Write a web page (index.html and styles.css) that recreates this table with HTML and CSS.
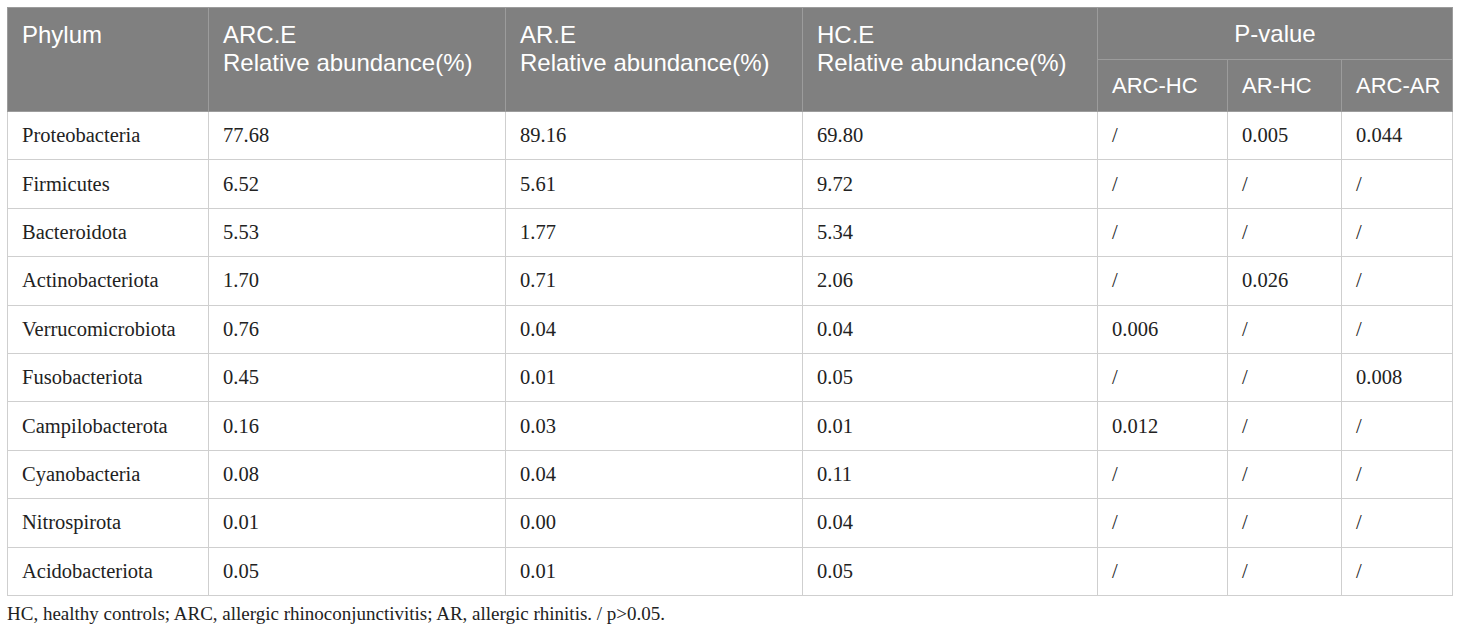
FILE: index.html
```html
<!DOCTYPE html>
<html lang="en">
<head>
  <meta charset="UTF-8" />
  <title>Relative abundance by phylum</title>
  <link rel="stylesheet" href="styles.css">
</head>
<body>
  <div class="table-wrap">
    <table>
      <colgroup>
        <col class="c-name"><col class="c-abund"><col class="c-abund"><col class="c-abund3">
        <col class="c-p1"><col class="c-p2"><col class="c-p3">
      </colgroup>
      <thead>
        <tr>
          <th rowspan="2" class="top">Phylum</th>
          <th rowspan="2" class="top">ARC.E<br>Relative abundance(%)</th>
          <th rowspan="2" class="top">AR.E<br>Relative abundance(%)</th>
          <th rowspan="2" class="top">HC.E<br>Relative abundance(%)</th>
          <th colspan="3" class="center">P-value</th>
        </tr>
        <tr class="sub"><th>ARC-HC</th><th>AR-HC</th><th>ARC-AR</th></tr>
      </thead>
      <tbody>
        <tr><td>Proteobacteria</td><td>77.68</td><td>89.16</td><td>69.80</td><td>/</td><td>0.005</td><td>0.044</td></tr>
        <tr><td>Firmicutes</td><td>6.52</td><td>5.61</td><td>9.72</td><td>/</td><td>/</td><td>/</td></tr>
        <tr><td>Bacteroidota</td><td>5.53</td><td>1.77</td><td>5.34</td><td>/</td><td>/</td><td>/</td></tr>
        <tr><td>Actinobacteriota</td><td>1.70</td><td>0.71</td><td>2.06</td><td>/</td><td>0.026</td><td>/</td></tr>
        <tr><td>Verrucomicrobiota</td><td>0.76</td><td>0.04</td><td>0.04</td><td>0.006</td><td>/</td><td>/</td></tr>
        <tr><td>Fusobacteriota</td><td>0.45</td><td>0.01</td><td>0.05</td><td>/</td><td>/</td><td>0.008</td></tr>
        <tr><td>Campilobacterota</td><td>0.16</td><td>0.03</td><td>0.01</td><td>0.012</td><td>/</td><td>/</td></tr>
        <tr><td>Cyanobacteria</td><td>0.08</td><td>0.04</td><td>0.11</td><td>/</td><td>/</td><td>/</td></tr>
        <tr><td>Nitrospirota</td><td>0.01</td><td>0.00</td><td>0.04</td><td>/</td><td>/</td><td>/</td></tr>
        <tr><td>Acidobacteriota</td><td>0.05</td><td>0.01</td><td>0.05</td><td>/</td><td>/</td><td>/</td></tr>
      </tbody>
    </table>
    <p class="note">HC, healthy controls; ARC, allergic rhinoconjunctivitis; AR, allergic rhinitis. / p&gt;0.05.</p>
  </div>
</body>
</html>
```

FILE: styles.css
```css
:root{
  --head:#808080;
  --head-line:#9c9c9c;
  --line:#cfcfcf;
  --text:#222;
}
*{box-sizing:border-box}
body{margin:0;background:#fff;color:var(--text);font-family:"Liberation Serif","Times New Roman",serif}
.table-wrap{padding:7px 7px 0 7px}
table{
  width:1446px;border-collapse:collapse;table-layout:fixed;
  border:1px solid var(--line);
}
.c-name{width:201px}
.c-abund{width:297px}
.c-abund3{width:295px}
.c-p1{width:130px}
.c-p2{width:114px}
.c-p3{width:111px}

th{
  background:var(--head);color:#fff;
  font-family:"Liberation Sans",Arial,sans-serif;
  font-weight:400;font-size:24px;line-height:28px;
  text-align:left;padding:0 14px;height:52px;
  border:1px solid var(--head-line);
  white-space:nowrap;
}
th.top{vertical-align:top;padding-top:13px}
th.center{text-align:center}
.sub th{font-size:22px}
td{
  height:48.4px;padding:0 14px;
  font-size:20.5px;border:1px solid var(--line);
  vertical-align:middle;
}
.note{margin:6px 0 0;font-size:19px;line-height:24px}
```
